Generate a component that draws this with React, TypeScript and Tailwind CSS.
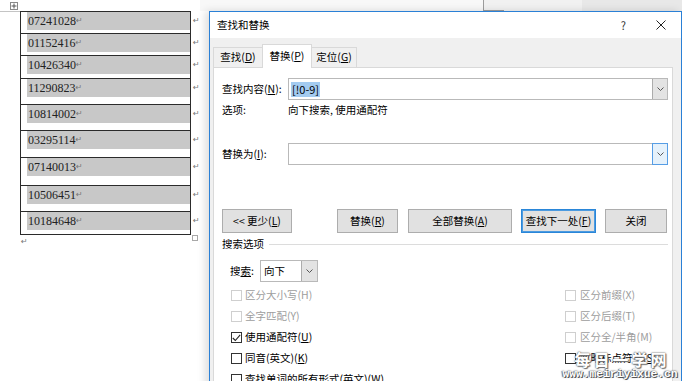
import React from "react";

const rows = [
  { n: "07241028", h: "h-[22px]" },
  { n: "01152416", h: "h-[22px]" },
  { n: "10426340", h: "h-[23px]" },
  { n: "11290823", h: "h-[26px]" },
  { n: "10814002", h: "h-[26px]" },
  { n: "03295114", h: "h-[27px]" },
  { n: "07140013", h: "h-[28px]" },
  { n: "10506451", h: "h-[26px]" },
  { n: "10184648", h: "h-[24px] border-b" },
];

const Chevron = () => (
  <svg width="7" height="4" viewBox="0 0 7 4">
    <path d="M0.5 0.5 L3.5 3.5 L6.5 0.5" fill="none" stroke="#555" strokeWidth="1" />
  </svg>
);

const Box = ({ on, off }: { on?: boolean; off?: boolean }) => (
  <span
    className={`w-[11px] h-[11px] shrink-0 border flex items-center justify-center bg-white ${
      off ? "border-[#cfcfcf]" : "border-[#333333]"
    }`}
  >
    {on && (
      <svg width="9" height="8" viewBox="0 0 9 8">
        <path d="M0.8 4 L3.3 6.5 L8.2 0.8" fill="none" stroke="#222" strokeWidth="1.1" />
      </svg>
    )}
  </span>
);

const Opt = ({ children, on, off, gap }: { children: React.ReactNode; on?: boolean; off?: boolean; gap?: string }) => (
  <div className="h-[21px] flex items-center">
    <Box on={on} off={off} />
    <span className={`${gap ?? "ml-[3px]"} whitespace-nowrap ${off ? "text-[#9d9d9d]" : "text-black"}`}>{children}</span>
  </div>
);

const Btn = ({ w, children, focus }: { w: string; children: React.ReactNode; focus?: boolean }) => (
  <div
    className={`${w} h-[24px] shrink-0 flex items-center justify-center bg-[#e1e1e1] border ${
      focus ? "border-[#2a86d8] shadow-[inset_0_0_0_1px_#4d9be0]" : "border-[#adadad]"
    }`}
  >
    {children}
  </div>
);

export default function App() {
  return (
    <div className="relative w-[682px] h-[381px] overflow-hidden bg-white flex">
      {/* document */}
      <div className="w-[200px] shrink-0 flex flex-col">
        <div className="h-[11px] pt-[2px] pl-[10px]">
          <svg width="8" height="8" viewBox="0 0 8 8">
            <rect x="0.5" y="0.5" width="7" height="7" fill="#fff" stroke="#8a8a8a" />
            <path d="M4 1.5 V6.5 M1.5 4 H6.5" stroke="#555" strokeWidth="1" />
          </svg>
        </div>
        <div className="flex">
          <div className="w-[20px] h-0 border-t border-[#c4c4c4]" />
          <div className="flex flex-col font-['Liberation_Serif',serif] text-[12px] text-[#222]">
            {rows.map((r) => (
              <div key={r.n} className="flex items-start">
                <div className={`w-[171px] ${r.h} border-l border-r border-t border-[#2b2b2b] pl-[6px]`}>
                  <div className="h-[18px] bg-[#c8c8c8] flex items-center pl-[1px] leading-none">
                    {r.n}
                    <span className="text-[8px] text-[#777] font-['DejaVu_Sans',sans-serif]">↵</span>
                  </div>
                </div>
                <div className="ml-[2px] h-[19px] pt-[1px] flex items-center text-[8px] text-[#777] font-['DejaVu_Sans',sans-serif]">
                  ↵
                </div>
              </div>
            ))}
            <div className="flex justify-between w-[178px] pl-[1px]">
              <span className="mt-[3px] text-[8px] leading-none text-[#777] font-['DejaVu_Sans',sans-serif]">↵</span>
              <span className="w-[6px] h-[6px] border border-[#a8a8a8]" />
            </div>
          </div>
        </div>
      </div>
      <div className="flex-1 flex flex-col">
        <div className="h-[11px] flex">
          <div className="w-[283px] bg-[#f8f8f8]" />
          <div className="w-px bg-[#9c9c9c]" />
          <div className="w-[98px] bg-[#f1f1f1] flex flex-col justify-end">
            <div className="w-[20px] h-px bg-[#9c9c9c]" />
          </div>
          <div className="flex-1 bg-[#e8e8e8]" />
        </div>
      </div>

      {/* dialog */}
      <div className="absolute left-[209px] top-[11px] w-[473px] h-[380px] border border-[#2a80d6] bg-[#f0f0f0] shadow-[-4px_0_8px_rgba(0,0,0,0.13)] flex flex-col font-['Noto_Sans_CJK_SC','Microsoft_YaHei',sans-serif] text-[10.5px] leading-none text-black">
        <div className="h-[26px] bg-white flex items-center pl-[7px] pr-[15px] shrink-0">
          <span>查找和替换</span>
          <span className="ml-auto mr-[30px] text-[11px] text-[#333]">?</span>
          <svg width="10" height="10" viewBox="0 0 10 10">
            <path d="M0.5 0.5 L9.5 9.5 M9.5 0.5 L0.5 9.5" stroke="#222" strokeWidth="1" />
          </svg>
        </div>

        <div className="mt-[6px] pl-[3px] flex items-end h-[24px] shrink-0 relative z-10">
          <div className="w-[50px] h-[20px] mb-px border border-b-0 border-[#d9d9d9] flex items-center justify-center">
            查找(<u>D</u>)
          </div>
          <div className="w-[50px] h-[24px] border border-b-0 border-[#d9d9d9] bg-white flex items-center justify-center -mx-px">
            替换(<u>P</u>)
          </div>
          <div className="w-[46px] h-[20px] mb-px border border-b-0 border-[#d9d9d9] flex items-center justify-center">
            定位(<u>G</u>)
          </div>
        </div>

        <div className="ml-[3px] w-[460px] flex-1 -mt-px border border-[#d9d9d9] bg-white pt-[10px] pl-[8px] pr-[4px] flex flex-col">
          <div className="h-[22px] flex items-center">
            <span className="w-[66px]">查找内容(<u>N</u>):</span>
            <div className="w-[380px] h-[22px] border border-[#b9b9b9] flex items-center pl-[2px]">
              <span className="bg-[#a3cbf0] px-[1px] py-[2px] text-[11px]">[!0-9]</span>
              <div className="ml-auto w-[15px] h-[20px] bg-[#e3e3e3] border-l border-[#acacac] flex items-center justify-center">
                <Chevron />
              </div>
            </div>
          </div>
          <div className="mt-[2px] h-[16px] flex items-center">
            <span className="w-[66px]">选项:</span>
            <span>向下搜索, 使用通配符</span>
          </div>
          <div className="mt-[25px] h-[22px] flex items-center">
            <span className="w-[66px]">替换为(<u>I</u>):</span>
            <div className="w-[380px] h-[22px] border border-[#b9b9b9] flex items-center">
              <div className="ml-auto w-[16px] h-[22px] -mr-px bg-[#e5f1fb] border border-[#569de5] flex items-center justify-center">
                <Chevron />
              </div>
            </div>
          </div>

          <div className="mt-[44px] flex">
            <Btn w="w-[70px]">&lt;&lt; 更少(<u>L</u>)</Btn>
            <div className="w-[45px] shrink-0" />
            <Btn w="w-[61px]">替换(<u>R</u>)</Btn>
            <div className="w-[10px] shrink-0" />
            <Btn w="w-[104px]">全部替换(<u>A</u>)</Btn>
            <div className="w-[9px] shrink-0" />
            <Btn w="w-[75px]" focus>
              查找下一处(<u>F</u>)
            </Btn>
            <div className="w-[9px] shrink-0" />
            <Btn w="w-[62px]">关闭</Btn>
          </div>

          <div className="mt-[3px] h-[16px] flex items-center">
            <span>搜索选项</span>
            <div className="ml-[5px] flex-1 h-px bg-[#dcdcdc]" />
          </div>

          <div className="mt-[8px] h-[22px] pl-[8px] flex items-center">
            <span className="w-[30px]">
              搜<u>索</u>:
            </span>
            <div className="w-[58px] h-[22px] border border-[#b9b9b9] flex items-center pl-[3px]">
              <span>向下</span>
              <div className="ml-auto w-[16px] h-[20px] bg-[#e3e3e3] border-l border-[#acacac] flex items-center justify-center">
                <Chevron />
              </div>
            </div>
          </div>

          <div className="mt-[3px] pl-[9px] grid grid-cols-[334px_1fr]">
            <div className="flex flex-col">
              <Opt off>区分大小写(H)</Opt>
              <Opt off>全字匹配(Y)</Opt>
              <Opt on>
                使用通配符(<u>U</u>)
              </Opt>
              <Opt>
                同音(英文)(<u>K</u>)
              </Opt>
              <Opt>
                查找单词的所有形式(英文)(<u>W</u>)
              </Opt>
            </div>
            <div className="flex flex-col">
              <Opt off gap="ml-[4px]">区分前缀(X)</Opt>
              <Opt off gap="ml-[4px]">区分后缀(T)</Opt>
              <Opt off gap="ml-[4px]">区分全/半角(M)</Opt>
              <Opt gap="ml-[4px]">
                忽略标点符号(<u>S</u>)
              </Opt>
            </div>
          </div>
        </div>
      </div>

      {/* watermark */}
      <div className="absolute left-[540px] top-[351px] w-[142px] flex flex-col items-center pointer-events-none">
        <span className="ml-[22px] text-[16px] leading-[17px] tracking-[3px] text-white font-['Noto_Sans_CJK_SC',sans-serif] font-bold [text-shadow:0_0_1px_#555,0_0_2px_#666,1px_1px_1px_#777]">
          每日一学网
        </span>
        <span className="ml-[18px] text-[11.3px] leading-[12px] text-white font-['Liberation_Mono',monospace] font-bold [text-shadow:1px_1px_0_#555,-1px_0_1px_#666,0_0_2px_#444]">
          www.meiriyixue.cn
        </span>
      </div>
    </div>
  );
}
